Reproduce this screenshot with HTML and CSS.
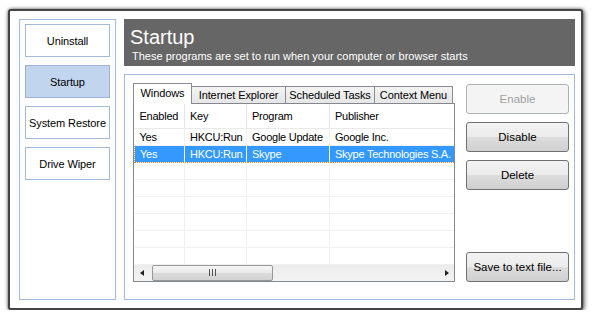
FILE: index.html
```html
<!DOCTYPE html>
<html lang="en">
<head>
    <meta charset="UTF-8">
    <title>Startup</title>
    <link rel="stylesheet" href="styles.css">
</head>
<body>
    <div class="window">
        <div class="sidebar">
            <div class="nav-btn">Uninstall</div>
            <div class="nav-btn active">Startup</div>
            <div class="nav-btn">System Restore</div>
            <div class="nav-btn">Drive Wiper</div>
        </div>
        <div class="main">
            <div class="header">
                <h1>Startup</h1>
                <p>These programs are set to run when your computer or browser starts</p>
            </div>
            <div class="panel">
                <div class="tabs">
                    <div class="tab-strip">
                        <div class="tab selected">Windows</div>
                        <div class="tab tab-ie">Internet Explorer</div>
                        <div class="tab tab-sched">Scheduled Tasks</div>
                        <div class="tab tab-ctx">Context Menu</div>
                    </div>
                    <div class="list">
                        <table>
                            <colgroup>
                                <col class="c1"><col class="c2"><col class="c3"><col>
                            </colgroup>
                            <thead>
                                <tr><th>Enabled</th><th>Key</th><th>Program</th><th>Publisher</th></tr>
                            </thead>
                            <tbody>
                                <tr><td>Yes</td><td>HKCU:Run</td><td>Google Update</td><td>Google Inc.</td></tr>
                                <tr class="sel"><td>Yes</td><td>HKCU:Run</td><td>Skype</td><td>Skype Technologies S.A.</td></tr>
                                <tr><td></td><td></td><td></td><td></td></tr>
                                <tr><td></td><td></td><td></td><td></td></tr>
                                <tr><td></td><td></td><td></td><td></td></tr>
                                <tr><td></td><td></td><td></td><td></td></tr>
                                <tr><td></td><td></td><td></td><td></td></tr>
                                <tr><td></td><td></td><td></td><td></td></tr>
                            </tbody>
                        </table>
                        <div class="hscroll">
                            <span class="arrow left"></span>
                            <div class="track">
                                <div class="thumb"><span class="grip"></span></div>
                            </div>
                            <span class="arrow right"></span>
                        </div>
                    </div>
                </div>
                <div class="actions">
                    <button class="btn" disabled>Enable</button>
                    <button class="btn">Disable</button>
                    <button class="btn">Delete</button>
                    <button class="btn save">Save to text file...</button>
                </div>
            </div>
        </div>
    </div>
</body>
</html>
```

FILE: styles.css
```css
* {
    box-sizing: border-box;
}

body {
    margin: 0;
    background: #fff;
    font-family: "Liberation Sans", Arial, sans-serif;
    font-size: 11px;
    color: #000;
}

.window {
    display: flex;
    gap: 8px;
    margin: 9px 0 0 8px;
    width: 575px;
    height: 301px;
    padding: 8px 6px 8px 9px;
    background: #fff;
    border: 2px solid #444;
    border-radius: 3px;
    box-shadow: 1px 1px 5px rgba(0, 0, 0, 0.65), 0 0 3px rgba(0, 0, 0, 0.4);
}

/* left navigation */
.sidebar {
    width: 97px;
    flex: none;
    border: 1px solid #a3bbd8;
    padding: 4px 5px;
    display: flex;
    flex-direction: column;
    gap: 8px;
}

.nav-btn {
    height: 33px;
    border: 1px solid #a3bbd8;
    background: #fff;
    display: flex;
    align-items: center;
    justify-content: center;
    font-size: 11px;
    letter-spacing: -0.1px;
    white-space: nowrap;
}

.nav-btn.active {
    background: #c2d5ef;
    border-color: #9db3d3;
}

/* right side */
.main {
    flex: 1;
    display: flex;
    flex-direction: column;
    gap: 8px;
}

.header {
    height: 47px;
    flex: none;
    background: #666;
    color: #fff;
    padding: 6px 6px 0 6px;
}

.header h1 {
    margin: 0;
    font-size: 20px;
    font-weight: normal;
    line-height: 24px;
}

.header p {
    margin: 1px 0 0 2px;
    font-size: 11px;
    line-height: 13px;
}

.panel {
    flex: 1;
    display: flex;
    gap: 11px;
    border: 1px solid #a3bbd8;
    padding: 8px 4px 17px 8px;
}

.tabs {
    width: 322px;
    flex: none;
    display: flex;
    flex-direction: column;
}

.tab-strip {
    display: flex;
    align-items: flex-end;
    height: 20px;
}

.tab {
    height: 17px;
    border: 1px solid #898c95;
    border-bottom: none;
    margin-left: -1px;
    background: linear-gradient(#f4f4f4, #e6e6e6);
    text-align: center;
    line-height: 16px;
    font-size: 11px;
    letter-spacing: -0.1px;
    white-space: nowrap;
}

.tab.selected {
    width: 59px;
    height: 21px;
    margin: 0 0 -1px 0;
    background: #fff;
    position: relative;
    z-index: 1;
    line-height: 18px;
}

.tab-ie {
    width: 95px;
}

.tab-sched {
    width: 90px;
}

.tab-ctx {
    width: 79px;
}

.list {
    height: 179px;
    border: 1px solid #828790;
    background: #fff;
    display: flex;
    flex-direction: column;
    overflow: hidden;
}

table {
    border-collapse: collapse;
    table-layout: fixed;
    width: 320px;
    letter-spacing: -0.25px;
}

col.c1 {
    width: 50px;
}

col.c2 {
    width: 62px;
}

col.c3 {
    width: 83px;
}

th {
    height: 24px;
    padding: 0 4px 0 5px;
    font-weight: normal;
    text-align: left;
    border-right: 1px solid #e5e5e5;
    border-bottom: 1px solid #e9e9e9;
    white-space: nowrap;
}

th:last-child,
td:last-child {
    border-right: none;
}

td {
    height: 17px;
    padding: 0 2px 0 5px;
    border-right: 1px solid #f0f0f0;
    border-bottom: 1px solid #f0f0f0;
    white-space: nowrap;
    overflow: hidden;
}

tr.sel td {
    background: #3399ff;
    color: #fff;
    border-right-color: #fff;
    border-top: 1px dotted #e8862a;
    border-bottom: 1px dotted #e8862a;
}

tr.sel td:first-child {
    border-left: 1px dotted #e8862a;
}

/* horizontal scrollbar */
.hscroll {
    margin-top: auto;
    height: 17px;
    flex: none;
    display: flex;
    align-items: center;
    background: linear-gradient(#ececec, #f3f3f3);
}

.arrow {
    width: 17px;
    height: 17px;
    flex: none;
    position: relative;
}

.arrow::after {
    content: "";
    position: absolute;
    top: 5px;
    border-top: 3.5px solid transparent;
    border-bottom: 3.5px solid transparent;
}

.arrow.left::after {
    left: 6px;
    border-right: 4px solid #222;
}

.arrow.right::after {
    left: 8px;
    border-left: 4px solid #222;
}

.track {
    flex: 1;
    height: 17px;
    padding: 0 1px;
}

.thumb {
    width: 121px;
    height: 16px;
    border: 1px solid #979797;
    border-radius: 2px;
    background: linear-gradient(#f6f6f6, #e9e9e9 50%, #dadada 51%, #d3d3d3);
    display: flex;
    align-items: center;
    justify-content: center;
}

.grip {
    width: 7px;
    height: 7px;
    background: repeating-linear-gradient(90deg, #555 0 1px, transparent 1px 3px);
}

/* action buttons */
.actions {
    width: 103px;
    flex: none;
    display: flex;
    flex-direction: column;
    gap: 8px;
    padding-top: 1px;
}

.btn {
    height: 30px;
    border: 1px solid #707070;
    border-radius: 3px;
    background: linear-gradient(#f2f2f2, #ebebeb 50%, #dddddd 50%, #cfcfcf);
    font-family: "Liberation Sans", Arial, sans-serif;
    font-size: 11.5px;
    color: #000;
    padding: 0;
}

.btn:disabled {
    border-color: #adb2b5;
    background: #f4f4f4;
    color: #a0a0a0;
}

.btn.save {
    margin-top: auto;
}
```
